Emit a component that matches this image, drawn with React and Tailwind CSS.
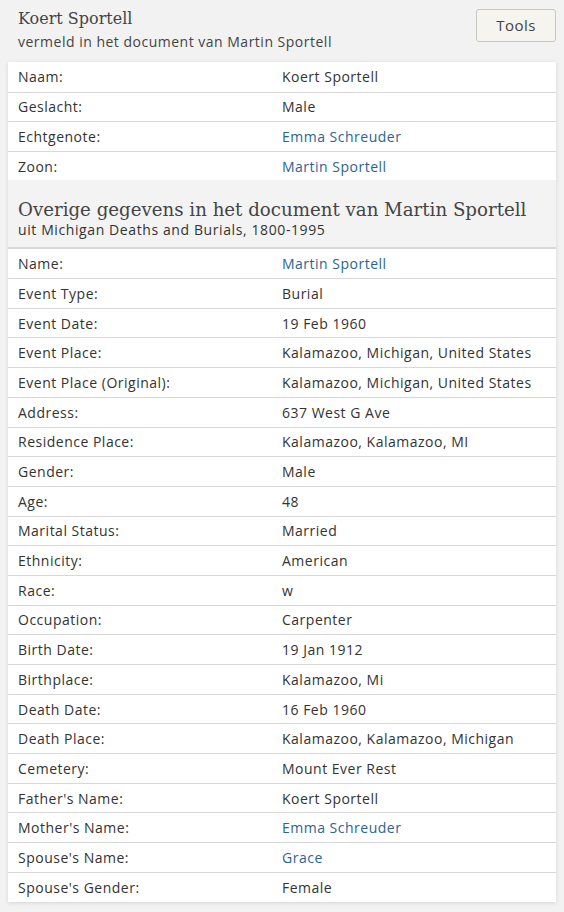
import React from "react";

const primary = [
  ["Naam:", "Koert Sportell"],
  ["Geslacht:", "Male"],
  ["Echtgenote:", "Emma Schreuder", true],
  ["Zoon:", "Martin Sportell", true],
];

const other = [
  ["Name:", "Martin Sportell", true],
  ["Event Type:", "Burial"],
  ["Event Date:", "19 Feb 1960"],
  ["Event Place:", "Kalamazoo, Michigan, United States"],
  ["Event Place (Original):", "Kalamazoo, Michigan, United States"],
  ["Address:", "637 West G Ave"],
  ["Residence Place:", "Kalamazoo, Kalamazoo, MI"],
  ["Gender:", "Male"],
  ["Age:", "48"],
  ["Marital Status:", "Married"],
  ["Ethnicity:", "American"],
  ["Race:", "w"],
  ["Occupation:", "Carpenter"],
  ["Birth Date:", "19 Jan 1912"],
  ["Birthplace:", "Kalamazoo, Mi"],
  ["Death Date:", "16 Feb 1960"],
  ["Death Place:", "Kalamazoo, Kalamazoo, Michigan"],
  ["Cemetery:", "Mount Ever Rest"],
  ["Father's Name:", "Koert Sportell"],
  ["Mother's Name:", "Emma Schreuder", true],
  ["Spouse's Name:", "Grace", true],
  ["Spouse's Gender:", "Female"],
];

function Row({ label, value, link, h }) {
  return (
    <div className={`flex items-center border-t border-[#d8d8d8] first:border-t-0 ${h}`}>
      <div className="w-[274px] pl-[10px]">{label}</div>
      <div className={link ? "text-[#2a6496]" : ""}>{value}</div>
    </div>
  );
}

export default function App() {
  return (
    <div className="min-h-[912px] bg-[#f2f2f2] font-['Open_Sans',Arial,sans-serif] text-[14px] tracking-[0.5px] text-[#333]">
      {/* header */}
      <div className="flex items-start justify-between pl-[18px] pr-[8px] pt-[8px]">
        <div>
          <div className="font-['DejaVu_Serif',serif] text-[16px] leading-[22px] tracking-normal text-[#444]">Koert Sportell</div>
          <div className="mt-[2px] leading-[19px] text-[#444]">vermeld in het document van Martin Sportell</div>
        </div>
        <button className="mt-[1px] h-[33px] w-[80px] rounded-[3px] border border-[#c8c6c0] bg-[#f6f4ef] text-[15px] text-[#444]">
          Tools
        </button>
      </div>

      {/* card */}
      <div className="mx-[8px] mt-[11px] bg-white shadow-[0_1px_4px_rgba(0,0,0,0.12)]">
        {primary.map(([l, v, k]) => (
          <Row key={l} label={l} value={v} link={k} h="h-[29.6px]" />
        ))}

        <div className="border-b border-[#d8d8d8] bg-[#f3f3f3] px-[10px] pt-[19px] pb-[9px]">
          <div className="font-['DejaVu_Serif',serif] text-[18.2px] leading-[22px] tracking-normal text-[#444]">
            Overige gegevens in het document van Martin Sportell
          </div>
          <div className="text-[14px] leading-[17px] tracking-[0.6px] text-[#333]">uit Michigan Deaths and Burials, 1800-1995</div>
        </div>

        {other.map(([l, v, k]) => (
          <Row key={l} label={l} value={v} link={k} h="h-[29.7px]" />
        ))}
      </div>
    </div>
  );
}
